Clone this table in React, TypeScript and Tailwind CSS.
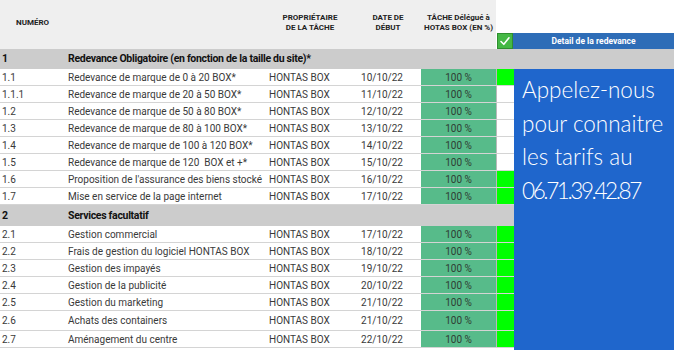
import React from "react";

type Row = { num: string; label: string; date: string; green: boolean; h?: string };

const rows1: Row[] = [
  { num: "1.1", label: "Redevance de marque de 0 à 20 BOX*", date: "10/10/22", green: true },
  { num: "1.1.1", label: "Redevance de marque de 20 à 50 BOX*", date: "11/10/22", green: false },
  { num: "1.2", label: "Redevance de marque de 50 à 80 BOX*", date: "12/10/22", green: false },
  { num: "1.3", label: "Redevance de marque de 80 à 100 BOX*", date: "13/10/22", green: false },
  { num: "1.4", label: "Redevance de marque de 100 à 120 BOX*", date: "14/10/22", green: false },
  { num: "1.5", label: "Redevance de marque de 120  BOX et +*", date: "15/10/22", green: false },
  { num: "1.6", label: "Proposition de l'assurance des biens stocké", date: "16/10/22", green: true },
  { num: "1.7", label: "Mise en service de la page internet", date: "17/10/22", green: true },
];

const rows2: Row[] = [
  { num: "2.1", label: "Gestion commercial", date: "17/10/22", green: true },
  { num: "2.2", label: "Frais de gestion du logiciel HONTAS BOX", date: "18/10/22", green: true },
  { num: "2.3", label: "Gestion des impayés", date: "19/10/22", green: true },
  { num: "2.4", label: "Gestion de la publicité", date: "20/10/22", green: true },
  { num: "2.5", label: "Gestion du marketing", date: "21/10/22", green: true },
  { num: "2.6", label: "Achats des containers", date: "21/10/22", green: true, h: "tall" },
  { num: "2.7", label: "Aménagement du centre", date: "22/10/22", green: true },
];

function DataRow({ r }: { r: Row }) {
  return (
    <div
      className={
        "flex items-center text-[10px] text-[#3a3a3a] border-b border-[#d4d4d4] " +
        (r.h === "tall" ? "h-[20px]" : "h-[17px]")
      }
    >
      <div className="w-[62px] pl-[2px] whitespace-nowrap">{r.num}</div>
      <div className="w-[203px] pl-[6px] whitespace-pre">{r.label}</div>
      <div className="w-[90px] pl-[4px] whitespace-nowrap">HONTAS BOX</div>
      <div className="w-[66px] pr-[18px] text-right whitespace-nowrap">{r.date}</div>
      <div className="w-[76px] h-full flex items-center justify-center bg-[#57bb8a] border-r border-[#b9b9b9] text-[#2f3b33]">
        100 %
      </div>
      <div className={"w-[17px] h-full " + (r.green ? "bg-[#00ff00]" : "bg-white")} />
    </div>
  );
}

export default function App() {
  return (
    <div className="w-[674px] h-[350px] overflow-hidden bg-white font-['Roboto',sans-serif] text-[#333]">
      {/* header */}
      <div className="flex h-[49px]">
        <div className="flex w-[496px] bg-[#efefef] text-[8px] font-bold leading-[10px] text-[#222] pb-[4px]">
          <div className="w-[62px] flex items-center pl-[16px]">NUMÉRO</div>
          <div className="w-[203px]" />
          <div className="w-[90px] flex items-center justify-center text-center">
            PROPRIÉTAIRE
            <br />
            DE LA TÂCHE
          </div>
          <div className="w-[66px] flex items-center justify-center text-center">
            DATE DE
            <br />
            DÉBUT
          </div>
          <div className="w-[75px] flex items-center justify-center text-center">
            TÂCHE Délégué à
            <br />
            HOTAS BOX (EN %)
          </div>
        </div>
        <div className="flex-1 flex items-end">
          <div className="flex h-[16px] w-full">
            <div className="w-[17px] h-[16px] pl-[1px]">
              <div className="w-[16px] h-[16px] bg-[#45b845] border border-[#2f8f2f] flex items-center justify-center">
                <svg width="12" height="12" viewBox="0 0 12 12">
                  <path d="M2 6.5 L4.8 9.3 L10 2.8" fill="none" stroke="white" strokeWidth="1.6" strokeLinecap="round" strokeLinejoin="round" />
                </svg>
              </div>
            </div>
            <div className="flex-1 bg-[#2e6db7] text-white text-[8.5px] font-bold flex items-center justify-center">
              Detail de la redevance
            </div>
          </div>
        </div>
      </div>

      {/* section 1 */}
      <div className="flex items-center h-[20px] bg-[#cccccc] text-[10.5px] tracking-[-0.3px] font-bold text-[#111]">
        <div className="w-[62px] pl-[2px]">1</div>
        <div className="pl-[6px] whitespace-nowrap">Redevance Obligatoire (en fonction de la taille du site)*</div>
      </div>

      <div className="flex">
        <div className="w-[514px] flex flex-col">
          {rows1.map((r) => (
            <DataRow key={r.num} r={r} />
          ))}
          <div className="flex items-center h-[21px] bg-[#cccccc] text-[10.5px] tracking-[-0.3px] font-bold text-[#111]">
            <div className="w-[62px] pl-[2px]">2</div>
            <div className="pl-[6px] whitespace-nowrap">Services facultatif</div>
          </div>
          {rows2.map((r) => (
            <DataRow key={r.num} r={r} />
          ))}
        </div>
        <div className="flex-1 h-[281px] bg-[#1f66cc] pl-[8px] pt-[4px] text-white font-['Lato',sans-serif] font-light text-[22.5px] leading-[33.5px]">
          <div>Appelez-nous</div>
          <div>pour connaitre</div>
          <div>les tarifs au</div>
          <div className="tracking-[-2.4px]">06.71.39.42.87</div>
        </div>
      </div>
    </div>
  );
}
